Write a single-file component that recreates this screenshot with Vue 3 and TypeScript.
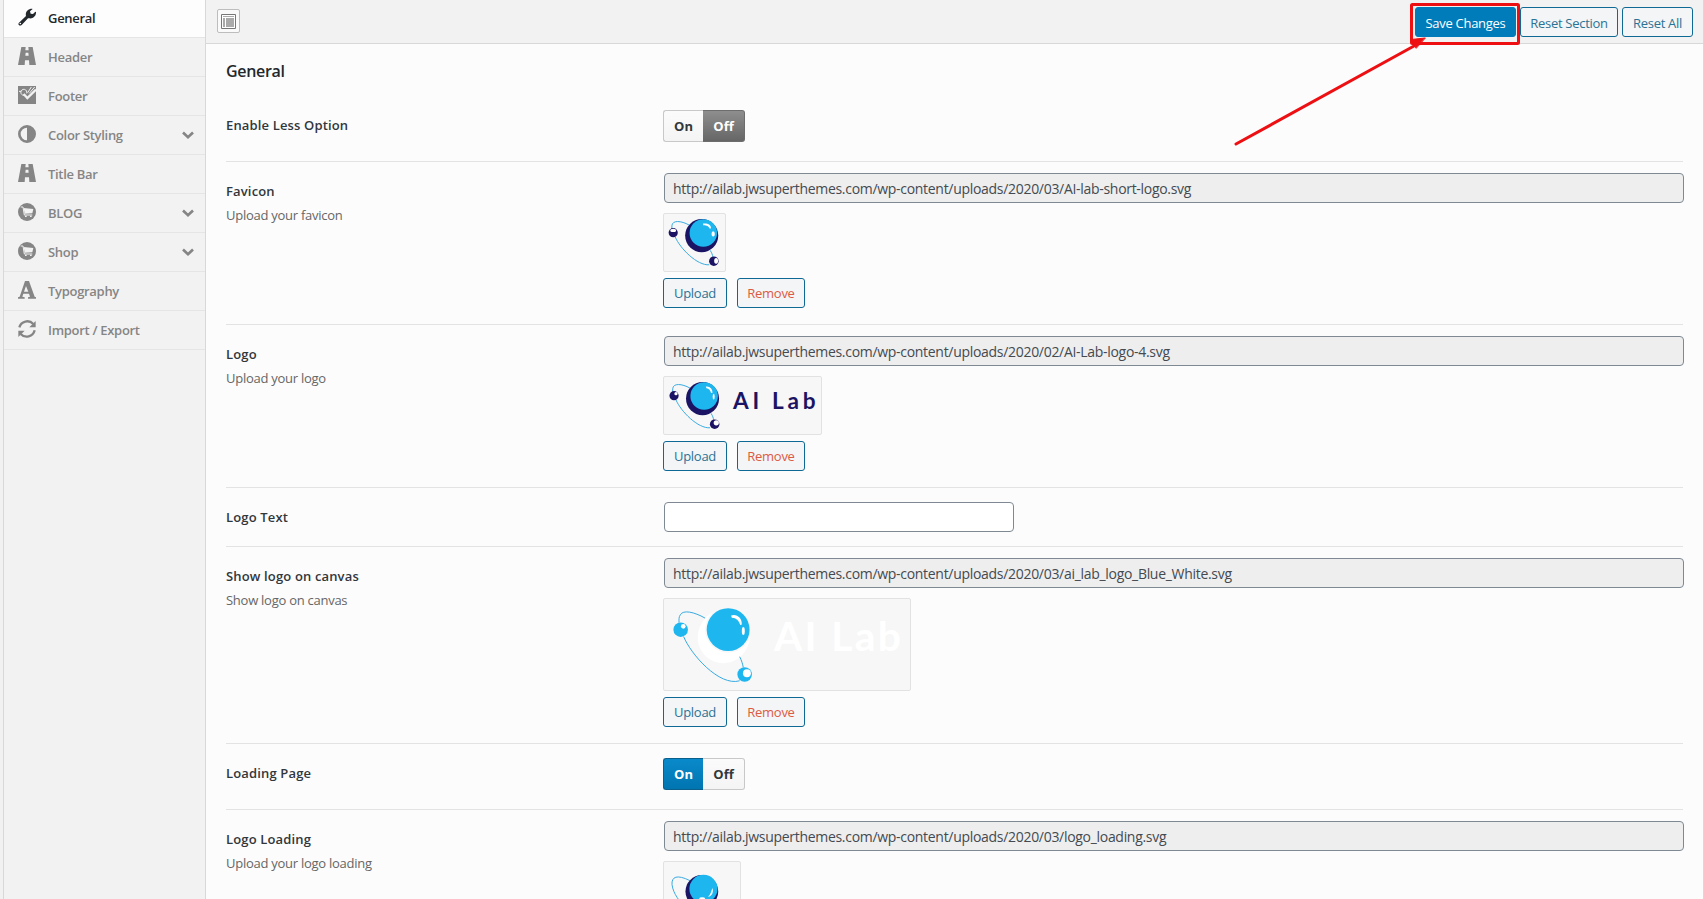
<script setup lang="ts">
interface MenuItem {
  icon: string
  label: string
  sub?: boolean
}

interface Field {
  title: string
  desc?: string
  kind: 'switch' | 'media' | 'text'
  on?: boolean
  url?: string
  art?: 'favicon' | 'logo' | 'canvas' | 'loading'
  size: string
}

const menu: MenuItem[] = [
  { icon: 'wrench', label: 'General' },
  { icon: 'road', label: 'Header' },
  { icon: 'check', label: 'Footer' },
  { icon: 'adjust', label: 'Color Styling', sub: true },
  { icon: 'road', label: 'Title Bar' },
  { icon: 'cart', label: 'BLOG', sub: true },
  { icon: 'cart', label: 'Shop', sub: true },
  { icon: 'font', label: 'Typography' },
  { icon: 'refresh', label: 'Import / Export' },
]

const uploads = 'http://ailab.jwsuperthemes.com/wp-content/uploads/'

const fields: Field[] = [
  { title: 'Enable Less Option', kind: 'switch', on: false, size: 'first' },
  { title: 'Favicon', desc: 'Upload your favicon', kind: 'media', url: uploads + '2020/03/AI-lab-short-logo.svg', art: 'favicon', size: 'tall' },
  { title: 'Logo', desc: 'Upload your logo', kind: 'media', url: uploads + '2020/02/AI-Lab-logo-4.svg', art: 'logo', size: 'tall' },
  { title: 'Logo Text', kind: 'text', size: 'short' },
  { title: 'Show logo on canvas', desc: 'Show logo on canvas', kind: 'media', url: uploads + '2020/03/ai_lab_logo_Blue_White.svg', art: 'canvas', size: 'taller' },
  { title: 'Loading Page', kind: 'switch', on: true, size: 'medium' },
  { title: 'Logo Loading', desc: 'Upload your logo loading', kind: 'media', url: uploads + '2020/03/logo_loading.svg', art: 'loading', size: 'last' },
]
</script>

<template>
  <div class="panel">
    <aside class="sidebar">
      <ul class="menu">
        <li v-for="(item, i) in menu" :key="item.label" class="menu-item" :class="{ active: i === 0 }">
          <svg class="menu-icon" viewBox="0 0 54 54">
            <path v-if="item.icon === 'wrench'" fill-rule="evenodd" d="M3 44 L24 24 C21 13 29 2 42 2 L44 3 L36 10 L38 17 L45 18 L52 11 L54 12 C55 24 45 33 34 31 L30 31 L11 51 C4 56 -2 49 3 44 Z M7 44 A2.5 2.5 0 1 0 7 49 A2.5 2.5 0 1 0 7 44 Z" />
            <path v-else-if="item.icon === 'road'" d="M10 0 H23 L22 10 H32 L31 0 H44 L54 54 H34 L33 40 H21 L20 54 H0 Z M23 17 L22 26 H32 L31 17 Z" />
            <g v-else-if="item.icon === 'check'">
              <path d="M0 0 H54 V54 H0 Z" />
              <path class="cut" d="M26 22 A9 9 0 1 0 18 28 M3 16 H9 M40 3 L29 20" />
              <path class="cut thick" d="M17 24 L28 36 L54 11" />
              <path class="cut" d="M34 22 L50 3" />
            </g>
            <path v-else-if="item.icon === 'adjust'" fill-rule="evenodd" d="M27 0 A27 27 0 1 0 27 54 A27 27 0 1 0 27 0 Z M27 8 V46 A19 19 0 0 1 27 8 Z" />
            <g v-else-if="item.icon === 'cart'">
              <circle cx="27" cy="27" r="27" />
              <path class="cut" d="M8 12 H15 L19 36 H43" />
              <path class="hole" d="M17 15 L46 18 L43 31 L20 32 Z M21 38 h5 v4 h-5 Z M36 38 h5 v4 h-5 Z" />
            </g>
            <path v-else-if="item.icon === 'font'" fill-rule="evenodd" d="M21 0 H33 L50 47 L54 49 V53 H30 V49 L36 47 L33 38 H16 L13 47 L20 49 V53 H0 V49 L5 47 Z M24 15 L18 32 H31 Z" />
            <g v-else>
              <path class="arc" d="M4 22 C9 3 33 -2 46 12 M50 31 C45 51 21 56 8 42" />
              <path d="M53 3 V22 H34 Z M1 51 V32 H20 Z" />
            </g>
          </svg>
          <span class="menu-label">{{ item.label }}</span>
          <svg v-if="item.sub" class="chevron" viewBox="0 0 12 9"><path d="M1 1.5 L6 6.3 L11 1.5" /></svg>
        </li>
      </ul>
    </aside>

    <main class="main">
      <header class="toolbar">
        <span class="expand">
          <svg viewBox="0 0 15 15">
            <path class="frame" d="M.5 .5 H14.5 V14.5 H.5 Z" />
            <path class="block" d="M2 2 H13 V3 H2 Z M2 4 H4 V13 H2 Z M5 4 H13 V13 H5 Z" />
          </svg>
        </span>
        <div class="actions">
          <button class="btn primary">Save Changes</button>
          <button class="btn">Reset Section</button>
          <button class="btn reset-all">Reset All</button>
        </div>
      </header>

      <section class="content">
        <h2 class="heading">General</h2>
        <div v-for="f in fields" :key="f.title" class="field" :class="f.size">
          <div class="info">
            <div class="title">{{ f.title }}</div>
            <div v-if="f.desc" class="desc">{{ f.desc }}</div>
          </div>
          <div class="control">
            <div v-if="f.kind === 'switch'" class="switch">
              <span class="opt left" :class="{ blue: f.on }">On</span>
              <span class="opt right" :class="{ grey: !f.on }">Off</span>
            </div>
            <div v-else-if="f.kind === 'text'" class="input empty"></div>
            <template v-else>
              <div class="input readonly">{{ f.url }}</div>
              <div class="shot" :class="f.art">
                <svg v-if="f.art === 'canvas'" viewBox="3 0 741 276">
                  <circle cx="184" cy="110" r="78" fill="#fff" />
                  <circle cx="195" cy="93" r="70" fill="#f7f7f7" />
                  <path class="moon" d="M118 70 A78 78 0 1 0 258 125 A70 70 0 0 1 127 75 Z" />
                  <circle cx="195" cy="93" r="65" fill="#1eb6ef" />
                  <path class="orbit" d="M125 58 C92 39 58 32 50 48 C45 55 46 62 46 72 M60 114 C82 168 168 266 230 248 M230 175 C236 187 239 197 241 208" />
                  <circle cx="51" cy="93" r="22" fill="#1eb6ef" /><circle cx="59" cy="83" r="7" fill="#fff" />
                  <circle cx="245" cy="229" r="22" fill="#1eb6ef" /><circle cx="252" cy="225" r="12" fill="#fff" />
                  <path d="M204 50 C220 43 239 58 236 78 L232 79 C227 65 220 58 206 57 Z" fill="#fff" />
                  <ellipse cx="241" cy="97" rx="4.5" ry="12" fill="#fff" />
                  <text x="334" y="157" class="word" fill="#fff" font-size="124" textLength="385">AI Lab</text>
                </svg>
                <svg v-else :viewBox="f.art === 'logo' ? '3 0 474 174' : f.art === 'favicon' ? '3 0 186 174' : '3 0 231 174'">
                  <g v-if="f.art === 'loading'">
                    <path class="orbit" d="M82 57 C42 37 25 45 27 69 C31 98 49 119 76 150" />
                    <circle cx="118" cy="90" r="50" fill="#1b1464" />
                    <circle cx="123" cy="82" r="43" fill="#1eb6ef" />
                    <path d="M150 79 C155 91 149 104 137 106 C145 98 146 91 150 79 Z" fill="#fff" />
                    <ellipse cx="119" cy="112" rx="9" ry="4.5" fill="#fff" />
                  </g>
                  <g v-else>
                    <path class="orbit" d="M80 34 C55 20 28 18 27 36 V45 M37 70 C52 105 104 158 141 155 M144 111 C149 119 151 125 152 131" />
                    <circle cx="118" cy="66" r="50.5" fill="#1b1464" />
                    <circle cx="123" cy="58" r="42" fill="#1eb6ef" />
                    <path v-if="f.art === 'favicon'" d="M122 29 C136 27 148 33 146 44 H142 C139 36 134 35 123 34 Z" fill="#fff" />
                    <path v-else d="M128 29 C140 27 150 37 148 49 H144 C142 41 138 35 130 34 Z" fill="#fff" />
                    <ellipse v-if="f.art === 'favicon'" cx="153" cy="61" rx="5" ry="8" fill="#fff" />
                    <ellipse v-else cx="152" cy="60" rx="3" ry="9" fill="#fff" />
                    <circle cx="31" cy="57" r="14" fill="#1b1464" />
                    <ellipse v-if="f.art === 'favicon'" cx="31" cy="50" rx="9" ry="5" fill="#fff" />
                    <circle v-else cx="37" cy="51" r="5" fill="#fff" />
                    <circle cx="155" cy="144" r="14.5" fill="#1b1464" />
                    <ellipse v-if="f.art === 'favicon'" cx="162" cy="143" rx="6" ry="9" fill="#fff" />
                    <circle v-else cx="160" cy="140" r="8" fill="#fff" />
                  </g>
                  <text v-if="f.art === 'logo'" x="211" y="97" class="word" fill="#1b1464" font-size="69" textLength="252">AI Lab</text>
                </svg>
              </div>
              <div v-if="f.art !== 'loading'" class="pair">
                <button class="btn upload">Upload</button>
                <button class="btn remove">Remove</button>
              </div>
            </template>
          </div>
        </div>
      </section>

      <svg class="marker" viewBox="0 0 300 160">
        <rect x="181.5" y="4.5" width="107" height="39" rx="1" />
        <path d="M6 144 L184 46" />
        <path class="head" d="M195 38 L181 39.5 L186 48 Z" />
      </svg>
    </main>
  </div>
</template>

<style>
html,
body {
  margin: 0;
  overflow: hidden;
  background: #f1f1f1;
}
</style>

<style scoped>
.panel,
.panel * {
  box-sizing: border-box;
}
.panel {
  display: flex;
  height: 899px;
  padding-left: 3px;
  overflow: hidden;
  background: #f1f1f1;
  font-family: "Open Sans", "Noto Sans", sans-serif;
  font-size: 13px;
}
.sidebar {
  flex: none;
  width: 203px;
  border: solid #d8d8d8;
  border-width: 0 1px;
  background: #f2f2f2;
}
.menu {
  margin: 0;
  padding: 0;
  list-style: none;
}
.menu-item {
  display: flex;
  align-items: center;
  height: 39px;
  padding: 0 11px 0 14px;
  border-bottom: 1px solid #e5e5e5;
  color: #858585;
  fill: #858585;
}
.menu-item.active {
  height: 38px;
  padding-bottom: 2px;
  background: #fdfdfd;
  color: #23282d;
  fill: #23282d;
}
.menu-item.active .menu-icon {
  margin-top: -2px;
}
.menu-icon {
  width: 18px;
  height: 18px;
  margin: -3px 12px 0 0;
}
.menu-label {
  flex: 1;
  font-weight: 600;
  letter-spacing: -0.3px;
  line-height: 18px;
}
.cut {
  fill: none;
  stroke: #f2f2f2;
  stroke-width: 3;
}
.cut.thick {
  stroke-width: 7;
}
.hole {
  fill: #f2f2f2;
}
.arc {
  fill: none;
  stroke: #858585;
  stroke-width: 7;
}
.chevron {
  width: 12px;
  height: 9px;
  margin-top: 0;
  fill: none;
  stroke: #858585;
  stroke-width: 2.6;
}
.main {
  position: relative;
  flex: 1;
  border-right: 1px solid #d8d8d8;
  background: #fcfcfc;
}
.toolbar {
  display: flex;
  justify-content: space-between;
  height: 44px;
  padding: 7px 10px 0 11px;
  border-bottom: 1px solid #d8d8d8;
  background: #f2f2f2;
}
.expand {
  display: flex;
  align-items: center;
  justify-content: center;
  width: 23px;
  height: 24px;
  margin-top: 2px;
  border: 1px solid #bdbdbd;
  border-radius: 2px;
  background: #fafafa;
}
.expand svg {
  width: 15px;
  height: 15px;
}
.frame {
  fill: #fff;
  stroke: #777;
}
.block {
  fill: #aaa;
}
.actions {
  display: flex;
}
.btn {
  height: 30px;
  padding: 0;
  border: 1px solid #0e6a94;
  border-radius: 3px;
  background: #f3f5f6;
  color: #2b7295;
  font: 400 13px "Open Sans", "Noto Sans", sans-serif;
  letter-spacing: -0.28px;
  width: 98px;
}
.actions .btn {
  padding-top: 2px;
}
.btn.primary {
  width: 101px;
  margin-right: 4px;
  border-color: #007cba;
  background: #007cba;
  color: #fff;
}
.btn.reset-all {
  width: 71px;
  margin-left: 4px;
}
.content {
  padding: 0 20px 0 20px;
}
.heading {
  height: 53px;
  margin: 0;
  padding-top: 15px;
  color: #23282d;
  font-size: 16px;
  font-weight: 600;
  letter-spacing: -0.3px;
  line-height: 24px;
}
.field {
  display: flex;
  border-bottom: 1px solid #e3e3e3;
}
.info {
  flex: none;
  width: 437px;
  padding-top: 19px;
}
.title {
  color: #32373c;
  font-weight: 600;
  letter-spacing: 0.15px;
  line-height: 20px;
}
.desc {
  margin-top: 4px;
  color: #666;
  letter-spacing: -0.26px;
  line-height: 20px;
}
.control {
  flex: 1;
  padding-top: 11px;
}
.first {
  height: 65px;
}
.first .info {
  padding-top: 18px;
}
.first .control {
  padding-top: 13px;
}
.tall {
  height: 163px;
}
.short {
  height: 59px;
}
.short .control,
.medium .control {
  padding-top: 14px;
}
.taller {
  height: 197px;
}
.medium {
  height: 66px;
}
.last {
  height: 200px;
}
.switch {
  display: flex;
  width: 82px;
  height: 32px;
}
.opt {
  width: 42px;
  border: 1px solid #c8c8c8;
  background: linear-gradient(#fbfbfb, #f4f4f4);
  color: #32373c;
  font-size: 13px;
  font-weight: 700;
  line-height: 31px;
  text-align: center;
}
.opt.left {
  width: 40px;
  border-right: 0;
  border-radius: 3px 0 0 3px;
}
.opt.right {
  border-left: 0;
  border-radius: 0 3px 3px 0;
}
.opt.blue {
  border-color: #0a5f8c;
  background: linear-gradient(#0a8acb, #0075b0);
  color: #fff;
}
.opt.grey {
  border-color: #6d6d6d;
  background: linear-gradient(#8e8e8e, #666);
  color: #fff;
}
.input {
  height: 30px;
  margin-left: 1px;
  margin-right: -1px;
  padding: 0 8px;
  border: 1px solid #7e8993;
  border-radius: 4px;
  background: #eee;
  color: #444a50;
  font-size: 14px;
  letter-spacing: -0.3px;
  line-height: 29px;
}
.input.empty {
  width: 350px;
  background: #fff;
}
.shot {
  width: 63px;
  height: 59px;
  margin-top: 10px;
  overflow: hidden;
  border: 1px solid #e2e2e2;
  border-radius: 2px;
  background: #f7f7f7;
}
.shot.logo {
  width: 159px;
}
.shot.loading {
  width: 78px;
}
.shot.canvas {
  width: 248px;
  height: 93px;
}
.shot svg {
  display: block;
  width: 100%;
  height: 100%;
}
.moon {
  fill: #fff;
}
.orbit {
  fill: none;
  stroke: #35a9df;
  stroke-width: 3;
}
.word {
  font-family: Lato, "Open Sans", sans-serif;
  font-weight: 700;
}
.pair {
  display: flex;
  gap: 10px;
  margin-top: 6px;
}
.btn.upload {
  width: 64px;
}
.btn.remove {
  width: 68px;
  color: #dd5a43;
}
.marker {
  position: absolute;
  top: 0;
  left: 1024px;
  width: 300px;
  height: 160px;
  fill: none;
  stroke: #ee0f12;
  stroke-width: 3;
  stroke-linecap: round;
}
.marker .head {
  fill: #ee0f12;
  stroke-width: 1;
}
</style>
